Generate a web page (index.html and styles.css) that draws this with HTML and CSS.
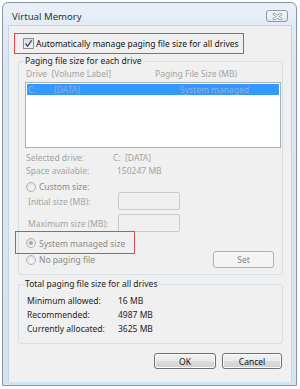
FILE: index.html
```html
<!DOCTYPE html>
<html lang="en">
<head>
  <meta charset="UTF-8">
  <meta name="viewport" content="width=device-width, initial-scale=1.0">
  <title>Virtual Memory</title>
  <link rel="stylesheet" href="styles.css">
</head>
<body>
  <div class="window">
    <div class="titlebar">
      <span class="title">Virtual Memory</span>
      <button class="close-btn" aria-label="Close">
        <svg width="11" height="7" viewBox="0 0 11 7">
          <path d="M2 1 L9 6 M9 1 L2 6" stroke="#7d8794" stroke-width="2.6" stroke-linecap="round"/>
          <path d="M2 1 L9 6 M9 1 L2 6" stroke="#ffffff" stroke-width="1.2" stroke-linecap="round"/>
        </svg>
      </button>
    </div>

    <div class="client">
      <div class="auto-box">
        <span class="checkbox">
          <svg width="11" height="11" viewBox="0 0 11 11">
            <path d="M2.5 5.5 L4.6 8.2 L8.6 2.3" fill="none" stroke="#3b4f8f" stroke-width="1.4"/>
          </svg>
        </span>
        <span class="auto-label">Automatically manage paging file size for all drives</span>
      </div>

      <fieldset class="group group-drives">
        <legend>Paging file size for each drive</legend>
        <div class="list-head">
          <span class="col-drive">Drive&nbsp; [Volume Label]</span>
          <span>Paging File Size (MB)</span>
        </div>
        <div class="listbox">
          <div class="list-row selected">
            <span class="col-letter">C:</span>
            <span class="col-label">[DATA]</span>
            <span>System managed</span>
          </div>
        </div>

        <div class="info-row"><span class="info-key">Selected drive:</span><span>C:&nbsp; [DATA]</span></div>
        <div class="info-row"><span class="info-key">Space available:</span><span class="info-num">150247 MB</span></div>

        <div class="radio-row custom"><span class="radio"></span><span>Custom size:</span></div>
        <div class="size-row first">
          <span class="size-label">Initial size (MB):</span>
          <span class="textbox"></span>
        </div>
        <div class="size-row">
          <span class="size-label">Maximum size (MB):</span>
          <span class="textbox"></span>
        </div>
        <div class="radio-row managed marked"><span class="radio checked"></span><span>System managed size</span></div>
        <div class="set-row">
          <div class="radio-row"><span class="radio"></span><span>No paging file</span></div>
          <button class="btn btn-disabled">Set</button>
        </div>
      </fieldset>

      <fieldset class="group group-total">
        <legend>Total paging file size for all drives</legend>
        <div class="total-row"><span class="total-key">Minimum allowed:</span><span>16 MB</span></div>
        <div class="total-row"><span class="total-key">Recommended:</span><span>4987 MB</span></div>
        <div class="total-row"><span class="total-key">Currently allocated:</span><span>3625 MB</span></div>
      </fieldset>

      <div class="actions">
        <button class="btn btn-ok">OK</button>
        <button class="btn btn-cancel">Cancel</button>
      </div>
    </div>
  </div>
</body>
</html>
```

FILE: styles.css
```css
body {
  margin: 0;
  background: #ffffff;
  font-family: "Noto Sans", "DejaVu Sans", sans-serif;
  font-size: 8.5px;
  color: #1e1e1e;
  white-space: nowrap;
}

.window {
  margin: 2px 0 0 2px;
  width: 295px;
  height: 384px;
  box-sizing: border-box;
  border: 1px solid #8c96a2;
  border-radius: 6px 6px 0 0;
  padding: 0 4px 3px 5px;
  background: linear-gradient(#e9f0f8, #d9e5f2 60px, #d6e3f1);
}

.titlebar {
  height: 22px;
  display: flex;
  align-items: center;
  justify-content: space-between;
  padding-top: 4px;
  box-sizing: border-box;
}

.title {
  padding-left: 4px;
  font-size: 9.6px;
  color: #333333;
}

.close-btn {
  width: 22px;
  height: 12px;
  margin-right: 4px;
  padding: 0;
  border: 1px solid #8e99a6;
  border-radius: 3px;
  background: linear-gradient(#f7f9fb, #e2e8ef);
  display: flex;
  align-items: center;
  justify-content: center;
}

.client {
  height: 357px;
  box-sizing: border-box;
  padding: 7px 0 0 5px;
  background: #f0f0f0;
  border: 1px solid #c7d3e0;
  border-bottom: none;
}

/* first annotation */
.auto-box {
  width: 230px;
  height: 21px;
  box-sizing: border-box;
  border: 1px solid #e2474b;
  display: flex;
  align-items: center;
  padding-left: 8px;
  gap: 2px;
}

.checkbox {
  width: 11px;
  height: 11px;
  flex: none;
  box-sizing: border-box;
  border: 1px solid #8e8f8f;
  background: linear-gradient(#dcdcdc, #f6f6f6);
  display: flex;
}

.checkbox svg {
  margin: -1px;
}

.auto-label {
  color: #111111;
}

.group {
  margin: 1px 0 0 4px;
  width: 265px;
  box-sizing: border-box;
  border: 1px solid #d5dfe5;
  border-radius: 3px;
  padding: 0 0 6px 0;
  min-width: 0;
}

.group legend {
  margin-left: 5px;
  padding: 0 1px;
  line-height: 12px;
  color: #1a1a1a;
}

.list-head {
  margin-top: 1px;
  padding-left: 7px;
  display: flex;
  line-height: 12px;
  color: #a3a3a3;
}

.col-drive {
  width: 129px;
}

.listbox {
  margin: 2px 0 0 6px;
  width: 256px;
  height: 66px;
  box-sizing: border-box;
  border: 1px solid #a9b0b8;
  background: #ffffff;
  padding: 1px;
}

.list-row {
  height: 11px;
  display: flex;
  align-items: center;
  padding-left: 1px;
  color: #8fb0da;
}

.list-row.selected {
  background: #3399ff;
}

.col-letter {
  width: 26px;
}

.col-label {
  width: 126px;
}

.info-row {
  display: flex;
  line-height: 13px;
  padding-left: 7px;
  color: #a3a3a3;
}

.listbox + .info-row {
  margin-top: 3px;
}

.info-key {
  width: 87px;
}

.info-num {
  padding-left: 4px;
}

.radio-row {
  display: flex;
  align-items: center;
  gap: 3px;
  padding-left: 7px;
  height: 12px;
  color: #8a8a8a;
  position: relative;
}

.radio-row.custom {
  margin-top: 4px;
  height: 11px;
}

.radio {
  width: 10px;
  height: 10px;
  flex: none;
  box-sizing: border-box;
  border-radius: 50%;
  border: 1px solid #b4b4b4;
  background: radial-gradient(circle at 60% 65%, #f8f8f8, #dadada);
  display: flex;
  align-items: center;
  justify-content: center;
}

.radio.checked::after {
  content: "";
  width: 4px;
  height: 4px;
  border-radius: 50%;
  background: #a8a8a8;
}

.size-row {
  display: flex;
  align-items: center;
  height: 18px;
  padding-left: 9px;
  color: #a3a3a3;
}

.size-row + .size-row {
  margin-top: 4px;
}

.size-label {
  width: 90px;
}

.textbox {
  width: 62px;
  height: 18px;
  box-sizing: border-box;
  border: 1px solid #c9c9c9;
  border-radius: 2px;
  background: #f0f0f0;
}

.radio-row.managed {
  margin-top: 5px;
}

/* second annotation, drawn over the group border */
.marked::before {
  content: "";
  position: absolute;
  left: -4px;
  top: -6px;
  width: 120px;
  height: 23px;
  box-sizing: border-box;
  border: 1px solid #e2474b;
}

.set-row {
  margin-top: 2px;
  display: flex;
  align-items: center;
  justify-content: space-between;
  padding-right: 8px;
}

.btn {
  font-family: inherit;
  font-size: 8.5px;
  padding: 0;
  height: 17px;
  border-radius: 3px;
  box-sizing: border-box;
}

.btn-disabled {
  width: 61px;
  border: 1px solid #adb2b5;
  background: #f4f4f4;
  color: #838383;
}

.group-total {
  margin-top: 3px;
  padding-bottom: 7px;
}

.total-row {
  display: flex;
  line-height: 14px;
  padding-left: 8px;
  color: #1e1e1e;
}

legend + .total-row {
  margin-top: 4px;
}

.total-key {
  width: 91px;
}

.actions {
  margin-top: 9px;
  padding-right: 9px;
  display: flex;
  justify-content: flex-end;
  gap: 6px;
}

.btn-ok,
.btn-cancel {
  width: 62px;
  height: 16px;
  border: 1px solid #707070;
  color: #111111;
  background: linear-gradient(#f2f2f2, #ebebeb 50%, #dddddd 50%, #cfcfcf);
  box-shadow: inset 0 0 0 1px #fcfcfc;
}

.btn-cancel {
  width: 60px;
}
```
